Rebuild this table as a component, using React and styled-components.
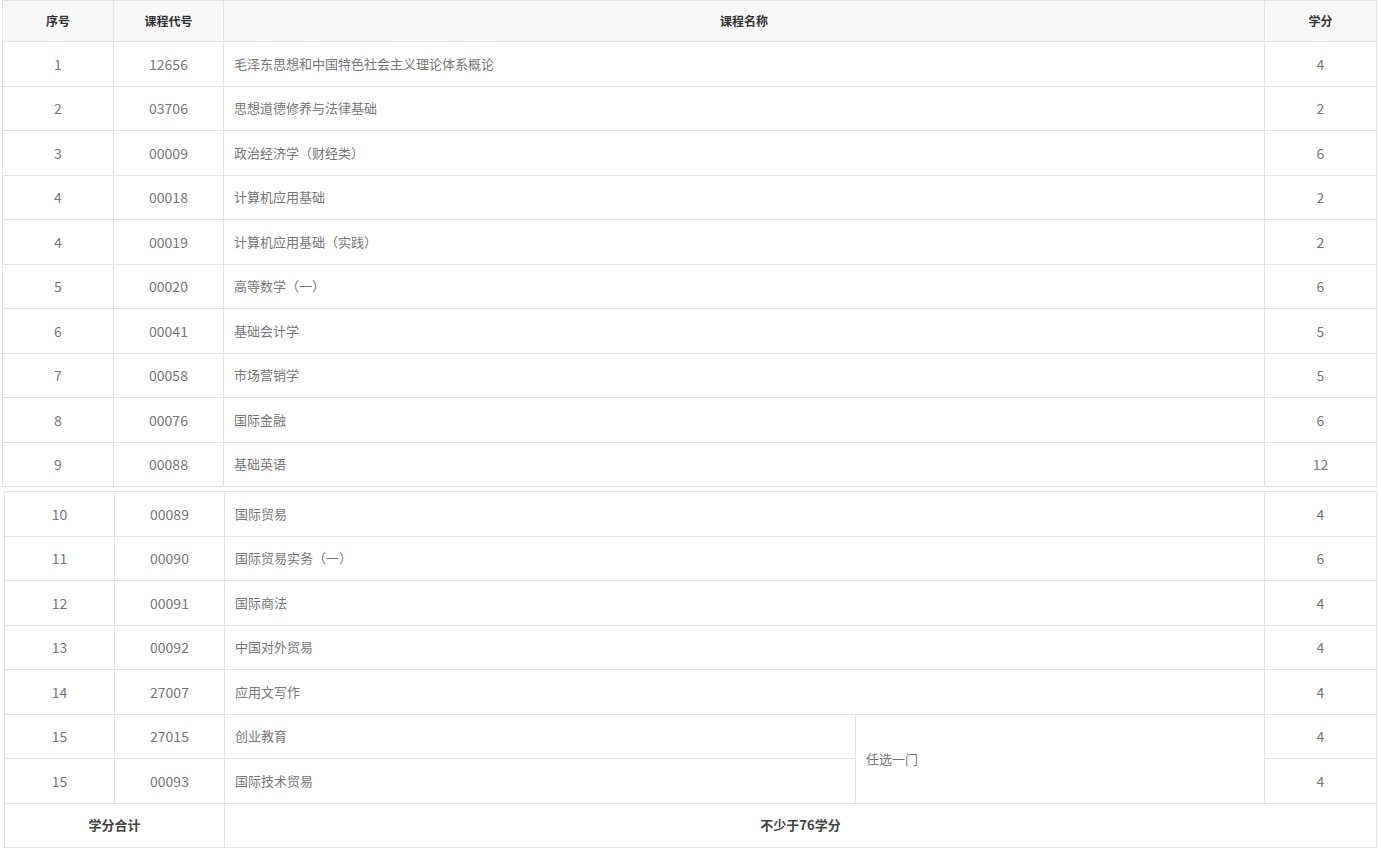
import React from 'react';
import styled, { createGlobalStyle } from 'styled-components';

const GlobalStyle = createGlobalStyle`
  html, body {
    margin: 0;
    padding: 0;
    background: #fff;
  }
  body {
    font-family: "Noto Sans CJK SC", "Noto Sans", sans-serif;
    font-size: 13px;
    color: #777;
  }
`;

const Page = styled.div`
  display: flex;
  flex-direction: column;
  gap: 4px;
  padding-left: 2px;
`;

const Table = styled.table`
  border-collapse: collapse;
  table-layout: fixed;
  width: ${(p) => p.$width}px;
  margin-left: ${(p) => p.$offset || 0}px;
  td, th {
    border: 1px solid #e3e3e3;
    padding: 0 10px;
    line-height: 16px;
  }
`;

const HeadRow = styled.tr`
  height: 41px;
  background: #f8f8f8;
`;

const Row = styled.tr`
  height: 44.5px;
`;

const Th = styled.th`
  font-weight: bold;
  color: #333;
  text-align: center;
  font-size: 12px;
`;

const Cell = styled.td`
  text-align: ${(p) => (p.$left ? 'left' : 'center')};
  font-weight: ${(p) => (p.$bold ? 'bold' : 'normal')};
  color: ${(p) => (p.$bold ? '#444' : '#777')};
  font-size: ${(p) => (p.$num ? '14px' : '13px')};
`;

const topRows = [
  ['1', '12656', '毛泽东思想和中国特色社会主义理论体系概论', '4'],
  ['2', '03706', '思想道德修养与法律基础', '2'],
  ['3', '00009', '政治经济学（财经类）', '6'],
  ['4', '00018', '计算机应用基础', '2'],
  ['4', '00019', '计算机应用基础（实践）', '2'],
  ['5', '00020', '高等数学（一）', '6'],
  ['6', '00041', '基础会计学', '5'],
  ['7', '00058', '市场营销学', '5'],
  ['8', '00076', '国际金融', '6'],
  ['9', '00088', '基础英语', '12'],
];

const bottomRows = [
  ['10', '00089', '国际贸易', '4'],
  ['11', '00090', '国际贸易实务（一）', '6'],
  ['12', '00091', '国际商法', '4'],
  ['13', '00092', '中国对外贸易', '4'],
  ['14', '27007', '应用文写作', '4'],
];

export default function App() {
  return (
    <>
      <GlobalStyle />
      <Page>
        <Table $width={1375}>
          <colgroup>
            <col style={{ width: 111 }} />
            <col style={{ width: 110 }} />
            <col />
            <col style={{ width: 112 }} />
          </colgroup>
          <thead>
            <HeadRow>
              <Th>序号</Th>
              <Th>课程代号</Th>
              <Th>课程名称</Th>
              <Th>学分</Th>
            </HeadRow>
          </thead>
          <tbody>
            {topRows.map((r, i) => (
              <Row key={i}>
                <Cell $num>{r[0]}</Cell>
                <Cell $num>{r[1]}</Cell>
                <Cell $left>{r[2]}</Cell>
                <Cell $num>{r[3]}</Cell>
              </Row>
            ))}
          </tbody>
        </Table>
        <Table $width={1373} $offset={2}>
          <colgroup>
            <col style={{ width: 110 }} />
            <col style={{ width: 110 }} />
            <col style={{ width: 631 }} />
            <col />
            <col style={{ width: 112 }} />
          </colgroup>
          <tbody>
            {bottomRows.map((r, i) => (
              <Row key={i}>
                <Cell $num>{r[0]}</Cell>
                <Cell $num>{r[1]}</Cell>
                <Cell $left colSpan={2}>{r[2]}</Cell>
                <Cell $num>{r[3]}</Cell>
              </Row>
            ))}
            <Row>
              <Cell $num>15</Cell>
              <Cell $num>27015</Cell>
              <Cell $left>创业教育</Cell>
              <Cell $left rowSpan={2}>任选一门</Cell>
              <Cell $num>4</Cell>
            </Row>
            <Row>
              <Cell $num>15</Cell>
              <Cell $num>00093</Cell>
              <Cell $left>国际技术贸易</Cell>
              <Cell $num>4</Cell>
            </Row>
            <Row>
              <Cell $bold colSpan={2}>学分合计</Cell>
              <Cell $bold colSpan={3}>不少于76学分</Cell>
            </Row>
          </tbody>
        </Table>
      </Page>
    </>
  );
}
